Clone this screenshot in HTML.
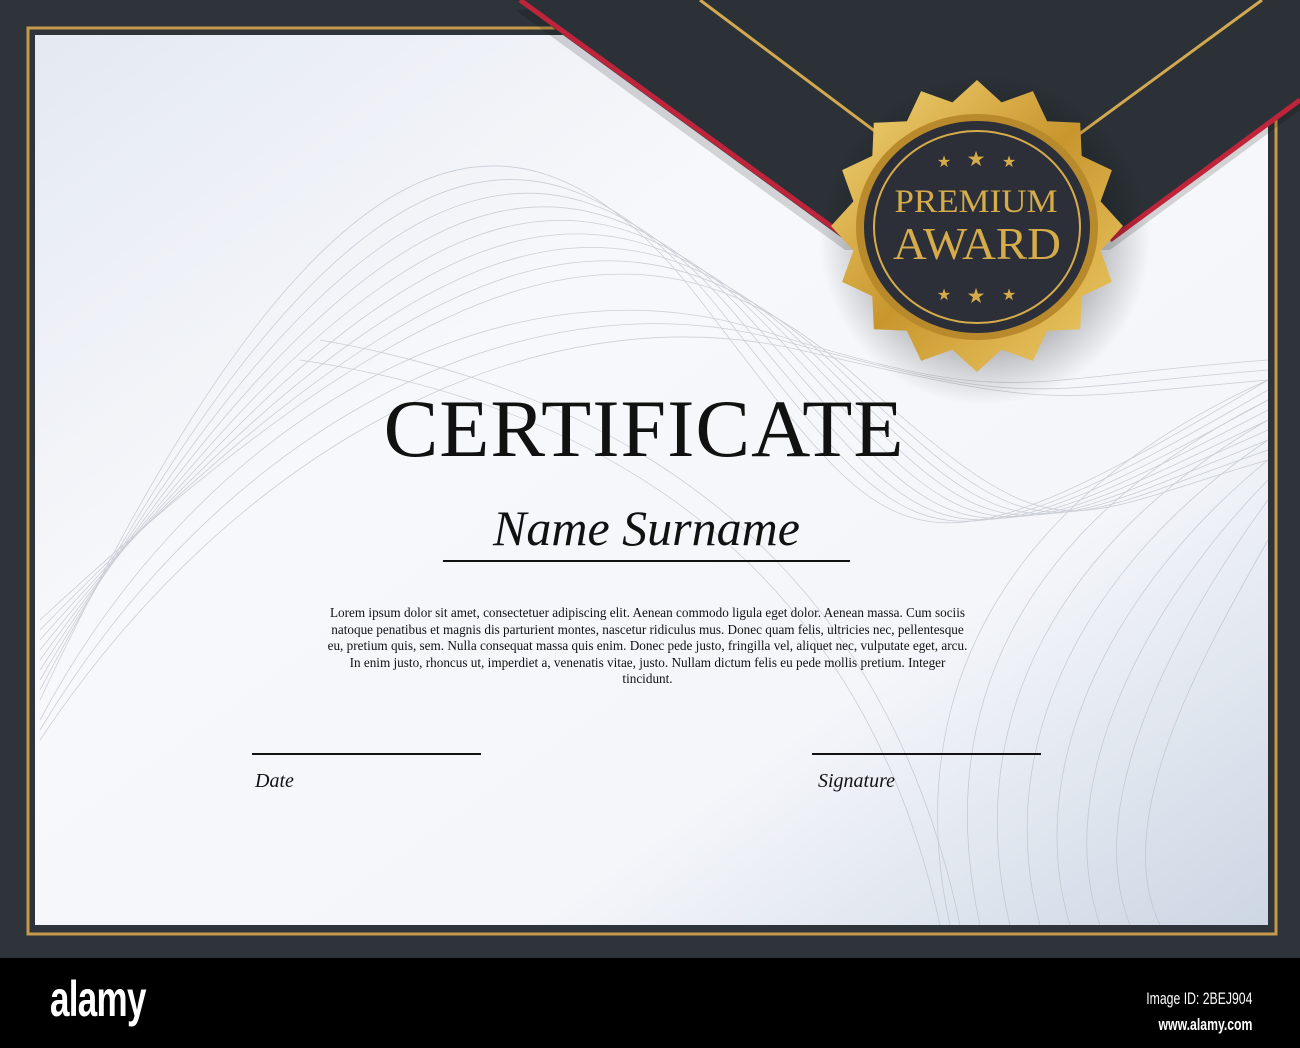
<!DOCTYPE html>
<html><head><meta charset="utf-8"><style>
html,body{margin:0;padding:0}
body{width:1300px;height:1048px;position:relative;overflow:hidden;background:#2e3439;font-family:"Liberation Serif",serif}
.abs{position:absolute}
</style></head><body>
<svg class="abs" style="left:0;top:0" width="1300" height="958" viewBox="0 0 1300 958">
<defs>
<linearGradient id="pap" x1="0" y1="0" x2="1" y2="1">
<stop offset="0" stop-color="#e4e9f2"/><stop offset="0.35" stop-color="#f7f8fb"/><stop offset="0.7" stop-color="#f4f6fa"/><stop offset="1" stop-color="#cdd6e4"/></linearGradient>
<linearGradient id="gold" x1="0" y1="0" x2="1" y2="1">
<stop offset="0" stop-color="#f3d77a"/><stop offset="0.5" stop-color="#c9962e"/><stop offset="1" stop-color="#f0cf6c"/></linearGradient>
<radialGradient id="sh" cx="0.5" cy="0.5" r="0.5"><stop offset="0.6" stop-color="#000" stop-opacity="0.3"/><stop offset="1" stop-color="#000" stop-opacity="0"/></radialGradient>
</defs>
<rect x="0" y="0" width="1300" height="958" fill="#2e3439"/>
<rect x="28" y="28" width="1248" height="906" fill="none" stroke="#c59a4a" stroke-width="3"/>
<rect x="35" y="35" width="1233" height="890" fill="url(#pap)"/>
<g fill="none" stroke="#b9bec6" stroke-width="0.8" opacity="0.7">
<path d="M40 700 C300 150 500 40 700 300 S 900 600 1268 380"/>
<path d="M40 690 C320 160 520 60 720 310 S 920 590 1268 390"/>
<path d="M40 680 C340 170 540 80 740 320 S 940 580 1268 400"/>
<path d="M40 670 C360 180 560 100 760 330 S 960 570 1268 410"/>
<path d="M40 660 C380 190 580 120 780 340 S 980 560 1268 420"/>
<path d="M40 650 C400 200 600 140 800 350 S 1000 550 1268 430"/>
<path d="M40 640 C420 210 620 160 820 360 S 1020 540 1268 440"/>
<path d="M40 630 C440 220 640 180 840 370 S 1040 530 1268 450"/>
<path d="M40 620 C460 230 660 200 860 380 S 1060 520 1268 460"/>
<path d="M40 720 C200 420 500 250 760 330 S 1000 380 1268 360"/>
<path d="M40 730 C220 430 520 270 780 340 S 1020 390 1268 370"/>
<path d="M40 740 C240 440 540 290 800 350 S 1040 400 1268 380"/>
<path d="M950 925 C900 700 1000 500 1268 380"/>
<path d="M980 925 C930 700 1030 520 1268 400"/>
<path d="M1010 925 C960 720 1060 540 1268 420"/>
<path d="M1040 925 C990 740 1090 560 1268 440"/>
<path d="M1070 925 C1020 760 1120 580 1268 460"/>
<path d="M1100 925 C1050 780 1150 600 1268 480"/>
<path d="M1130 925 C1080 800 1180 620 1268 500"/>
<path d="M1160 925 C1110 820 1200 660 1268 540"/>
<path d="M940 925 C880 650 700 420 300 360"/>
<path d="M960 925 C900 640 720 410 320 340"/>
</g>
<polygon points="515,0 1300,0 1300,100 1110,240 845,240" fill="#000" opacity="0.15" transform="translate(0,10)"/>
<polygon points="515,0 1300,0 1300,100 1110,240 845,240" fill="#2b3136"/>
<polyline points="520,0 850,240" stroke="#c0243a" stroke-width="5" fill="none"/>
<polyline points="1300,100 1110,240" stroke="#c0243a" stroke-width="5" fill="none"/>
<line x1="700" y1="0" x2="880" y2="135" stroke="#d2a850" stroke-width="3"/>
<line x1="1262" y1="0" x2="1078" y2="135" stroke="#d2a850" stroke-width="3"/>
<ellipse cx="985" cy="240" rx="165" ry="165" fill="url(#sh)"/>
<polygon fill="url(#gold)" points="977,80 1001.6,102.4 1032.9,91.1 1047.1,121.3 1080.2,122.8 1081.7,155.9 1111.9,170.1 1100.6,201.4 1123,226 1100.6,250.6 1111.9,281.9 1081.7,296.1 1080.2,329.2 1047.1,330.7 1032.9,360.9 1001.6,349.6 977,372 952.4,349.6 921.1,360.9 906.9,330.7 873.8,329.2 872.3,296.1 842.1,281.9 853.4,250.6 831,226 853.4,201.4 842.1,170.1 872.3,155.9 873.8,122.8 906.9,121.3 921.1,91.1 952.4,102.4"/>
<ellipse cx="977" cy="227" rx="121" ry="113" fill="#b88a2c"/>
<ellipse cx="977" cy="227" rx="113" ry="106" fill="#2c2f38"/>
<ellipse cx="977" cy="227" rx="103" ry="96" fill="none" stroke="#d6ac4a" stroke-width="2"/>
<g fill="#d6ac4a" font-size="16" text-anchor="middle">
<text x="944" y="167">★</text><text x="976" y="166" font-size="21">★</text><text x="1009" y="167">★</text>
<text x="944" y="300">★</text><text x="976" y="303" font-size="21">★</text><text x="1009" y="300">★</text>
</g>
<text x="976" y="212" text-anchor="middle" fill="#d6ac4a" font-family="Liberation Serif,serif" font-size="33" textLength="163" lengthAdjust="spacingAndGlyphs">PREMIUM</text>
<text x="977" y="259" text-anchor="middle" fill="#d6ac4a" font-family="Liberation Serif,serif" font-size="46" textLength="168" lengthAdjust="spacingAndGlyphs">AWARD</text>
</svg>
<div class="abs" style="left:0;top:388px;width:1288px;text-align:center;font-size:82px;color:#111;letter-spacing:1px;line-height:82px">CERTIFICATE</div>
<div class="abs" style="left:443px;top:498px;width:407px;text-align:center;font-size:50px;font-style:italic;color:#111;line-height:60px;font-family:'Liberation Serif',serif">Name Surname</div>
<div class="abs" style="left:443px;top:560px;width:407px;height:2px;background:#111"></div>
<div class="abs" style="left:325px;top:605px;width:645px;text-align:center;font-size:13.2px;line-height:16.6px;color:#111">Lorem ipsum dolor sit amet, consectetuer adipiscing elit. Aenean commodo ligula eget dolor. Aenean massa. Cum sociis natoque penatibus et magnis dis parturient montes, nascetur ridiculus mus. Donec quam felis, ultricies nec, pellentesque eu, pretium quis, sem. Nulla consequat massa quis enim. Donec pede justo, fringilla vel, aliquet nec, vulputate eget, arcu. In enim justo, rhoncus ut, imperdiet a, venenatis vitae, justo. Nullam dictum felis eu pede mollis pretium. Integer tincidunt.</div>
<div class="abs" style="left:252px;top:753px;width:229px;height:2px;background:#111"></div>
<div class="abs" style="left:812px;top:753px;width:229px;height:2px;background:#111"></div>
<div class="abs" style="left:255px;top:770px;font-size:20px;font-style:italic;color:#111">Date</div>
<div class="abs" style="left:818px;top:770px;font-size:20px;font-style:italic;color:#111">Signature</div>
<div class="abs" style="left:0;top:958px;width:1300px;height:90px;background:#000"></div>
<div class="abs" style="left:50px;top:970px;font-family:'Liberation Sans',sans-serif;font-weight:bold;font-size:50px;color:#fff;transform:scaleX(0.7);transform-origin:left;letter-spacing:-1px">alamy</div>
<div class="abs" style="right:48px;top:986px;font-family:'Liberation Sans',sans-serif;font-size:17px;color:#fff;text-align:right;line-height:26px;transform:scaleX(0.72);transform-origin:right">Image ID: 2BEJ904<br><b>www.alamy.com</b></div>
</body></html>
